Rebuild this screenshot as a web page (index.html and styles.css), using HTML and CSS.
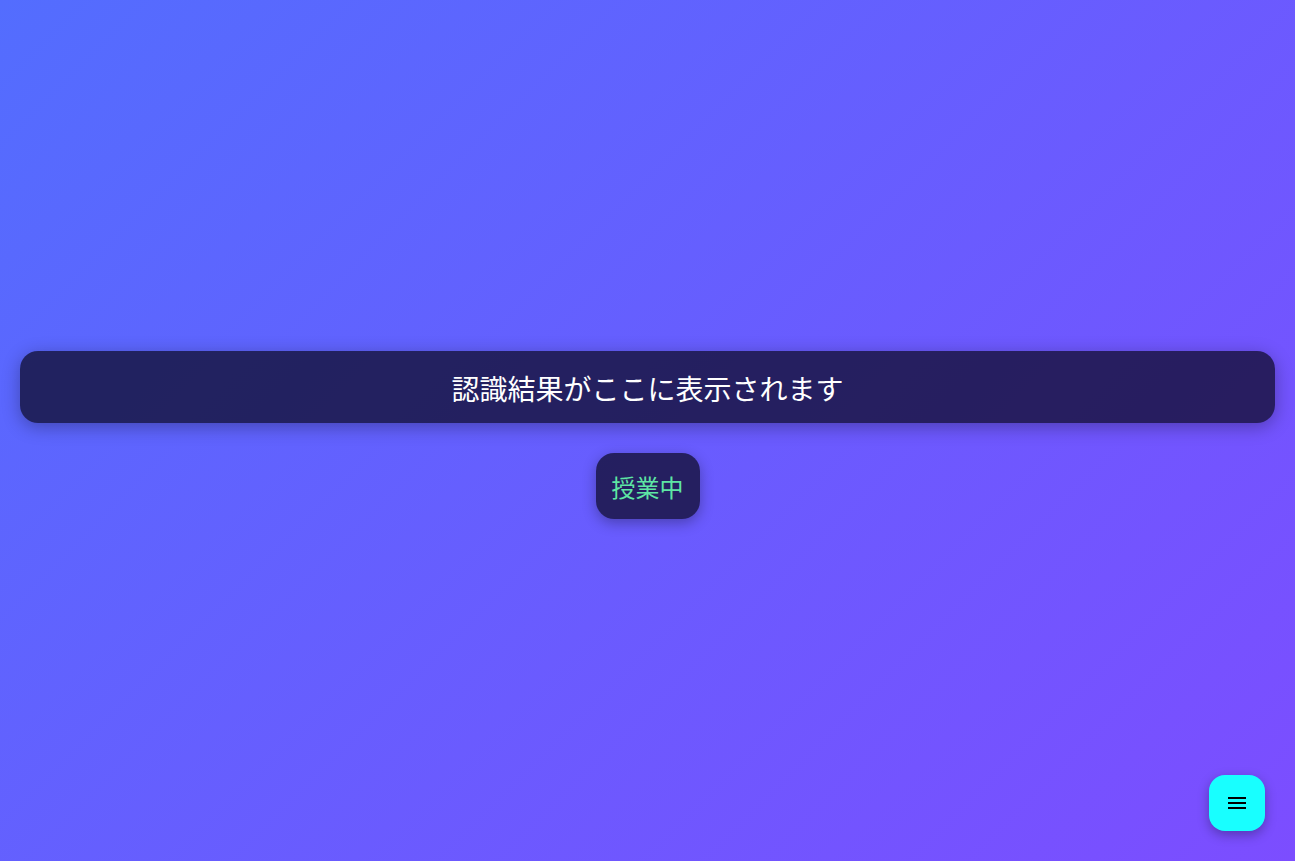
FILE: index.html
```html
<!DOCTYPE html>
<html lang="ja">
<head>
<meta charset="utf-8">
<title>認識結果</title>
<link rel="stylesheet" href="styles.css">
</head>
<body>
<main class="stage">
  <div class="result-bar">認識結果がここに表示されます</div>
  <div class="status-badge">授業中</div>
</main>
<button class="fab" aria-label="メニュー">
  <svg width="24" height="24" viewBox="0 0 24 24"><path d="M3 18h18v-2H3v2zm0-5h18v-2H3v2zm0-7v2h18V6H3z" fill="#000"/></svg>
</button>
</body>
</html>
```
FILE: styles.css
```css
html, body {
  margin: 0;
  padding: 0;
  height: 100%;
}
body {
  background: linear-gradient(135deg, #536dfe 0%, #7c4dff 100%);
  font-family: "Noto Sans CJK JP", "Noto Sans", sans-serif;
  overflow: hidden;
}
.stage {
  height: 100%;
  box-sizing: border-box;
  padding: 9px 20px 0;
  display: flex;
  flex-direction: column;
  align-items: center;
  justify-content: center;
}
.result-bar {
  align-self: stretch;
  height: 72px;
  padding-top: 2px;
  box-sizing: border-box;
  display: flex;
  align-items: center;
  justify-content: center;
  background: rgba(8, 6, 28, 0.7);
  border-radius: 18px;
  box-shadow: 0 4px 18px rgba(0, 0, 0, 0.3);
  color: #ffffff;
  font-size: 28px;
}
.status-badge {
  margin-top: 30px;
  height: 66px;
  padding: 0 16px;
  box-sizing: border-box;
  display: flex;
  align-items: center;
  background: rgba(8, 6, 28, 0.7);
  border-radius: 18px;
  box-shadow: 0 4px 14px rgba(0, 0, 0, 0.3);
  color: #5ee6a4;
  font-size: 24px;
}
.fab {
  position: fixed;
  right: 30px;
  bottom: 30px;
  width: 56px;
  height: 56px;
  border: none;
  border-radius: 16px;
  background: #18ffff;
  box-shadow: 0 4px 12px rgba(0, 0, 0, 0.3);
  display: flex;
  align-items: center;
  justify-content: center;
  padding: 0;
  cursor: pointer;
}
.fab svg {
  display: block;
}
```
